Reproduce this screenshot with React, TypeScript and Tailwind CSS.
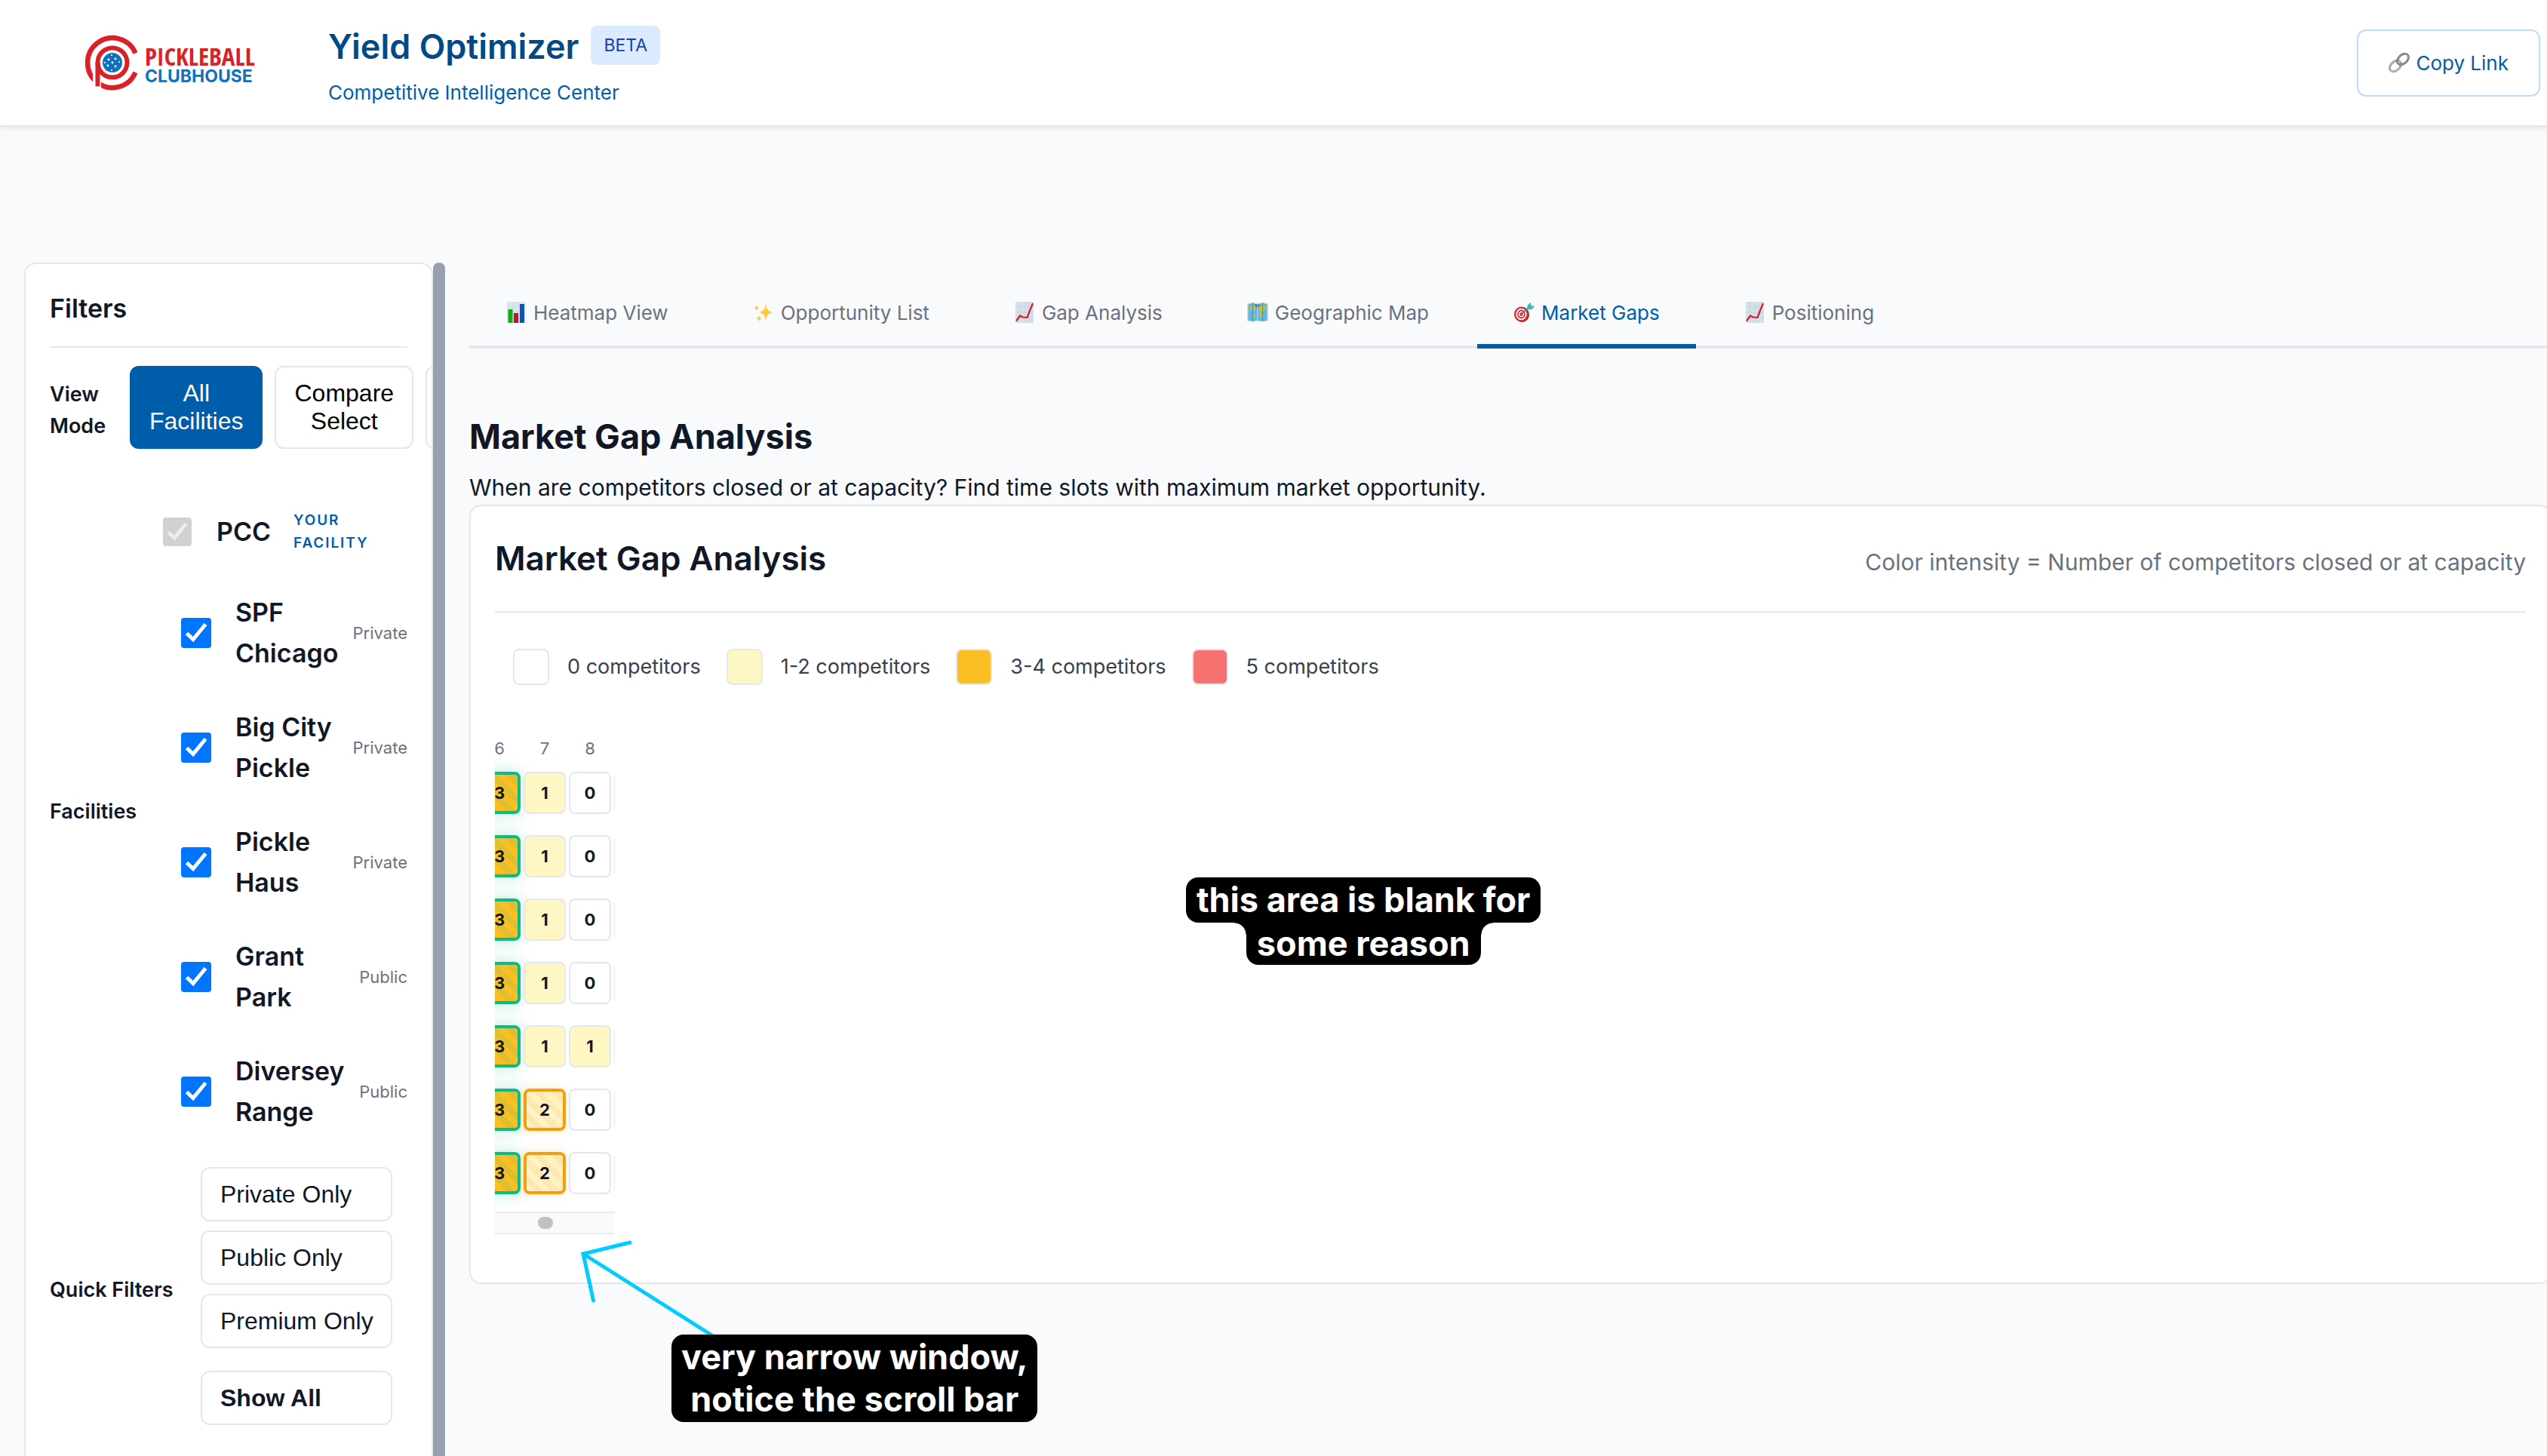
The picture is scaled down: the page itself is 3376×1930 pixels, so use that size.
import type { ReactNode } from "react";

const facilities = [
  { id: "spf", name: "SPF Chicago", kind: "Private" },
  { id: "bigcity", name: "Big City Pickle", kind: "Private" },
  { id: "haus", name: "Pickle Haus", kind: "Private" },
  { id: "grant", name: "Grant Park", kind: "Public" },
  { id: "diversey", name: "Diversey Range", kind: "Public" },
];

const hours = ["6", "7", "8", ""];

const rows: number[][] = [
  [3, 1, 0],
  [3, 1, 0],
  [3, 1, 0],
  [3, 1, 0],
  [3, 1, 1],
  [3, 2, 0],
  [3, 2, 0],
];

const cellStyles = [
  "border-2 border-gray-200 bg-white",
  "border-2 border-gray-200 bg-[#fef7c3]",
  "border-4 border-[#f59e0b] bg-[#fef3c7] bg-[repeating-linear-gradient(45deg,transparent_0px,transparent_8px,rgba(245,158,11,0.12)_8px,rgba(245,158,11,0.12)_16px)] shadow-[0_0_12px_rgba(245,158,11,0.25)]",
  "border-4 border-[#10b981] bg-[#fbbf24] bg-[repeating-linear-gradient(45deg,transparent_0px,transparent_8px,rgba(16,185,129,0.12)_8px,rgba(16,185,129,0.12)_16px)] shadow-[0_0_20px_rgba(16,185,129,0.3)]",
];

const legend = [
  { label: "0 competitors", swatch: "bg-white" },
  { label: "1-2 competitors", swatch: "bg-[#fef7c3]" },
  { label: "3-4 competitors", swatch: "bg-[#fbbf24]" },
  { label: "5 competitors", swatch: "bg-[#f87171]" },
];

function BarsIcon() {
  return (
    <svg viewBox="0 0 24 28" className="h-7 w-7" aria-hidden="true">
      <rect width="24" height="28" fill="#dbe7f0" />
      <path d="M0 7h24M0 14h24M0 21h24M8 0v28M16 0v28" stroke="#c3d3df" strokeWidth="0.6" />
      <rect x="1.5" y="10" width="6" height="18" fill="#0fae0f" />
      <rect x="9" y="15" width="6" height="13" fill="#c01525" />
      <rect x="17" y="3" width="6" height="25" fill="#0d55b8" />
    </svg>
  );
}

function SparklesIcon() {
  return (
    <svg viewBox="0 0 26 28" className="h-7 w-7" fill="#fdc93a" aria-hidden="true">
      <path d="M16 2c1 8 2.500 10.500 9.500 12C18.500 15.500 17 18 16 26c-1-8-2.500-10.500-9.500-12C13.500 12.500 15 10 16 2z" />
      <path d="M4 3c.5 3.500 1.200 4.500 4 5-2.800.500-3.500 1.500-4 5-.500-3.500-1.200-4.500-4-5 2.800-.500 3.500-1.500 4-5z" />
      <path d="M7 17c.5 3.500 1.200 4.500 4 5-2.800.500-3.500 1.500-4 5-.500-3.500-1.200-4.500-4-5 2.800-.500 3.500-1.500 4-5z" />
    </svg>
  );
}

function TrendIcon() {
  return (
    <svg viewBox="0 0 24 28" className="h-7 w-7" fill="none" aria-hidden="true">
      <rect width="24" height="28" fill="#d5e0ea" />
      <path d="M0 7h24M0 14h24M0 21h24M6 0v28M12 0v28M18 0v28" stroke="#c0ccd8" strokeWidth="0.6" />
      <path d="M1 25.500l5-7 3.500 2 6 0.500 3-8L23 2" stroke="#cf1f2b" strokeWidth="2.200" strokeLinejoin="round" />
    </svg>
  );
}

function MapIcon() {
  return (
    <svg viewBox="0 0 28 26" className="h-[26px] w-7" aria-hidden="true">
      <path d="M1 2l6.500-1.500L14 2l6.500-1.500L27 2v22l-6.500 1-6.500-1-6.500 1L1 24z" fill="#5bb8ee" stroke="#d9c9a4" strokeWidth="1.200" />
      <path d="M3 6c3-2 6-2 9 0l-2 4-3 2-3-3zM8 14l4 2-2 6-2-3zM15 6c3-2 7-2 10 0l-2 5-4 1-3-1zM16 13l5 1-1 6-3-1z" fill="#d0bb35" />
      <path d="M10 3l4-1 3 1-2 4-3-1z" fill="#3e7a67" />
      <path d="M7.500 0.500v24.500M20.500 0.500v24.500" stroke="#2d7fb6" strokeWidth="0.800" />
      <path d="M14 2v22" stroke="#a9dcf6" strokeWidth="1" />
    </svg>
  );
}

function TargetIcon() {
  return (
    <svg viewBox="0 0 28 28" className="h-7 w-7" fill="none" aria-hidden="true">
      <ellipse cx="11.500" cy="17" rx="9.500" ry="10" fill="#9c1b22" />
      <ellipse cx="10.500" cy="16.500" rx="9.500" ry="10" fill="#d9262f" />
      <ellipse cx="10.500" cy="16.500" rx="6.200" ry="6.800" stroke="#fff" strokeWidth="1.800" />
      <ellipse cx="10.500" cy="16.500" rx="2.800" ry="3.200" stroke="#fff" strokeWidth="1.400" />
      <path d="M11 16L21 7" stroke="#2b8f94" strokeWidth="1.800" />
      <path d="M18 9l1-5 4-3 .500 4L28 6l-3.500 4-5 .500z" fill="#3fb6b8" />
    </svg>
  );
}

function ChainIcon() {
  return (
    <svg viewBox="0 0 28 28" className="h-7 w-7" fill="none" aria-hidden="true">
      <ellipse cx="9" cy="18.500" rx="8.600" ry="5.800" transform="rotate(-42 9 18.500)" stroke="#74787f" strokeWidth="2.600" />
      <ellipse cx="9" cy="18.500" rx="8.600" ry="5.800" transform="rotate(-42 9 18.500)" stroke="#c3ccd5" strokeWidth="1.200" />
      <ellipse cx="19" cy="9.500" rx="8.600" ry="5.800" transform="rotate(-42 19 9.500)" stroke="#59535a" strokeWidth="2.600" />
      <ellipse cx="19" cy="9.500" rx="8.600" ry="5.800" transform="rotate(-42 19 9.500)" stroke="#a9b2bc" strokeWidth="1" />
    </svg>
  );
}

function LogoMark() {
  return (
    <svg viewBox="0 0 72 74" className="h-[74px] w-[72px]" fill="none" aria-hidden="true">
      <path d="M67.500 24.500A33 33 0 1 0 67.500 50" stroke="#da2128" strokeWidth="6.500" />
      <path d="M16.500 36V72" stroke="#fff" strokeWidth="11" />
      <path d="M17.500 68.500V37" stroke="#da2128" strokeWidth="6" />
      <circle cx="37" cy="37" r="19.500" stroke="#da2128" strokeWidth="6" />
      <circle cx="37" cy="37" r="13" fill="#0f73bb" />
      <g fill="#fff">
        <circle cx="37" cy="37" r="1.400" />
        <circle cx="32" cy="33" r="1.400" />
        <circle cx="41" cy="32" r="1.400" />
        <circle cx="31" cy="41" r="1.400" />
        <circle cx="41" cy="42" r="1.400" />
        <circle cx="36" cy="27" r="1.100" />
        <circle cx="46" cy="36" r="1.100" />
        <circle cx="36" cy="47" r="1.100" />
        <circle cx="27" cy="37" r="1.100" />
      </g>
    </svg>
  );
}

const tabs: { label: string; icon: ReactNode; active?: boolean }[] = [
  { label: "Heatmap View", icon: <BarsIcon /> },
  { label: "Opportunity List", icon: <SparklesIcon /> },
  { label: "Gap Analysis", icon: <TrendIcon /> },
  { label: "Geographic Map", icon: <MapIcon /> },
  { label: "Market Gaps", icon: <TargetIcon />, active: true },
  { label: "Positioning", icon: <TrendIcon /> },
];

function Checkbox({ id, disabled }: { id: string; disabled?: boolean }) {
  return (
    <span className="relative inline-flex shrink-0">
      <input
        id={id}
        type="checkbox"
        defaultChecked
        disabled={disabled}
        className={
          disabled
            ? "size-[38px] appearance-none rounded bg-[#d1d1d1]"
            : "size-10 appearance-none rounded bg-[#0075ff]"
        }
      />
      <svg viewBox="0 0 40 40" className="pointer-events-none absolute inset-0 size-full" fill="none" aria-hidden="true">
        <path d="M7.500 20.500L16 28.500L32.500 8.500" stroke={disabled ? "#ededed" : "#ffffff"} strokeWidth="5" />
      </svg>
    </span>
  );
}

function Header() {
  return (
    <header className="flex h-[168px] shrink-0 items-center border-b-2 border-gray-200 bg-white pr-[9px] pl-28 shadow-[0_2px_6px_rgba(0,0,0,0.08)]">
      <a href="#home" className="flex w-[323px] items-center gap-2">
        <LogoMark />
        <span className="mt-2 flex flex-col font-bold">
          <span className="font-['Open_Sans_Condensed','Roboto_Condensed',sans-serif] text-[33px] leading-7 text-[#da2128]">PICKLEBALL</span>
          <span className="text-[23px] leading-6 text-[#0f73bb]">CLUBHOUSE</span>
        </span>
      </a>
      <div className="mt-2 flex flex-col gap-[15px]">
        <div className="flex items-start gap-4">
          <h1 className="text-[45px] leading-[56px] font-semibold text-[#004b87]">Yield Optimizer</h1>
          <span className="rounded-lg bg-blue-100 px-[17px] text-[23px] leading-[52px] text-blue-800">BETA</span>
        </div>
        <p className="text-[26px] leading-9 text-[#005eaa]">Competitive Intelligence Center</p>
      </div>
      <button type="button" className="ml-auto flex h-[89px] items-center gap-2 rounded-xl border-2 border-blue-200 bg-white px-10 text-[26px] text-[#005eaa]">
        <ChainIcon />
        Copy Link
      </button>
    </header>
  );
}

const modeButton = "shrink-0 rounded-xl border-2 px-6 py-4 text-center font-['Liberation_Sans',Arial,sans-serif] text-[32px] leading-[37px]";
const quickButton = "h-[72px] rounded-xl border-2 border-gray-200 bg-white px-6 text-left font-['Liberation_Sans',Arial,sans-serif] text-[32px] leading-9 whitespace-nowrap";

function Sidebar() {
  return (
    <div className="flex shrink-0 items-stretch">
      <aside className="w-[542px] overflow-hidden rounded-t-2xl border-2 border-b-0 border-gray-200 bg-white px-8 pt-8">
        <h2 className="border-b-2 border-gray-200 pb-[23px] text-[34px] leading-[54px] font-semibold">Filters</h2>

        <section className="mt-6 flex items-center">
          <h3 className="mt-2 w-[106px] shrink-0 text-[27px] leading-[42px] font-semibold">
            View
            <br />
            Mode
          </h3>
          <div className="flex gap-4">
            <button type="button" className={`${modeButton} border-[#005daa] bg-[#005daa] text-white`}>
              All
              <br />
              Facilities
            </button>
            <button type="button" className={`${modeButton} border-gray-200 bg-white text-black`}>
              Compare
              <br />
              Select
            </button>
            <button type="button" aria-label="More modes" className={`${modeButton} border-gray-200 bg-white`} />
          </div>
        </section>

        <section className="mt-14 flex items-center justify-between">
          <h3 className="text-[27px] leading-[42px] font-semibold">Facilities</h3>
          <div className="w-[324px]">
            <div className="flex h-[108px] items-center">
              <Checkbox id="pcc" disabled />
              <label htmlFor="pcc" className="ml-[33px] text-[34px] leading-[54px] font-semibold">
                PCC
              </label>
              <span className="ml-[30px] w-28 text-[19px] leading-[30px] font-semibold tracking-widest text-[#005eaa]">YOUR FACILITY</span>
            </div>
            <ul className="mt-[26px] flex flex-col gap-11 pl-6">
              {facilities.map((f) => (
                <li key={f.id} className="flex items-center">
                  <Checkbox id={f.id} />
                  <label htmlFor={f.id} className="ml-8 min-w-0 flex-1 text-[34px] leading-[54px] font-semibold">
                    {f.name}
                  </label>
                  <span className="text-[22px] leading-8 text-gray-500">{f.kind}</span>
                </li>
              ))}
            </ul>
          </div>
        </section>

        <section className="mt-[46px] flex items-center justify-between pr-5">
          <h3 className="mb-4 text-[27px] leading-[42px] font-semibold">Quick Filters</h3>
          <div className="flex w-[254px] flex-col gap-3">
            <button type="button" className={quickButton}>Private Only</button>
            <button type="button" className={quickButton}>Public Only</button>
            <button type="button" className={quickButton}>Premium Only</button>
            <button type="button" className={`${quickButton} mt-[18px] font-bold`}>Show All</button>
          </div>
        </section>
      </aside>
      <div className="w-4 rounded-t-full bg-gray-400" />
    </div>
  );
}

function Heatmap() {
  return (
    <div className="mt-[66px] w-[159px] overflow-hidden">
      <table className="-ml-[26px] w-[244px] table-fixed border-separate border-spacing-x-1 border-spacing-y-0">
        <thead>
          <tr>
            {hours.map((h, i) => (
              <th key={i} scope="col" className="h-[35px] p-0 text-center text-[22px] leading-[34px] font-normal text-gray-500">
                {h}
              </th>
            ))}
          </tr>
        </thead>
        <tbody>
          {rows.map((row, r) => (
            <tr key={r}>
              {row.map((n, c) => (
                <td key={c} className="px-0 py-[14px]">
                  <div className={`flex h-14 items-center justify-center rounded-lg text-[22px] leading-7 font-bold ${cellStyles[n]}`}>{n}</div>
                </td>
              ))}
              <td className="px-0 py-[14px]">
                <div className="h-14 rounded-lg border-2 border-gray-200 bg-white" />
              </td>
            </tr>
          ))}
        </tbody>
      </table>
      <div className="mt-[9px] flex h-[30px] items-center justify-center border-y-2 border-[#ebebeb] bg-[#fafafa] pr-[26px]">
        <div className="h-4 w-5 rounded-full bg-[#c1c1c1]" />
      </div>
    </div>
  );
}

function Main() {
  return (
    <main className="-mr-1.5 ml-8 min-w-0 flex-1">
      <nav className="mt-6 flex gap-4 border-b-4 border-gray-200">
        {tabs.map((t) => (
          <button
            key={t.label}
            type="button"
            className={
              t.active
                ? "-mb-1 flex h-[90px] items-center gap-[9px] border-b-[6px] border-[#005daa] px-12 text-[26px] text-[#005daa]"
                : "-mb-1 flex h-[90px] items-center gap-[9px] border-b-[6px] border-transparent px-12 text-[26px] text-gray-500"
            }
          >
            {t.icon}
            {t.label}
          </button>
        ))}
      </nav>
      <h2 className="mt-[89px] text-[45px] leading-[56px] font-bold">Market Gap Analysis</h2>
      <p className="mt-4 text-[30px] leading-[46px]">
        When are competitors closed or at capacity? Find time slots with maximum market opportunity.
      </p>
      <section className="rounded-2xl border-2 border-gray-200 bg-white px-8 pt-[41px] pb-16">
        <div className="flex items-baseline justify-between border-b-2 border-gray-200 pb-[42px]">
          <h3 className="text-[44px] leading-[56px] font-semibold">Market Gap Analysis</h3>
          <p className="text-[30px] leading-[46px] text-gray-500">Color intensity = Number of competitors closed or at capacity</p>
        </div>
        <ul className="mt-12 flex gap-[34px] px-6">
          {legend.map((l) => (
            <li key={l.label} className="flex items-center gap-6 text-[27px] leading-[42px] text-gray-700">
              <span className={`size-12 rounded-lg border-2 border-gray-200 ${l.swatch}`} />
              {l.label}
            </li>
          ))}
        </ul>
        <Heatmap />
      </section>
    </main>
  );
}

function Annotations() {
  return (
    <>
      <svg viewBox="0 0 190 130" className="pointer-events-none absolute top-[1642px] left-[766px] h-[130px] w-[190px]" fill="none" aria-hidden="true">
        <path d="M69 5L7 20L20.500 82M7 20L184 132" stroke="#00ccff" strokeWidth="5" strokeLinecap="round" />
      </svg>
      <div className="absolute top-[1769px] left-[890px] rounded-2xl bg-black px-[13px] py-0.5 text-center text-[45px] leading-[56px] font-bold whitespace-nowrap text-white">
        very narrow window,
        <br />
        notice the scroll bar
      </div>
      <div className="absolute top-[1163px] left-[1572px] flex flex-col items-center text-[45px] leading-[56px] font-bold whitespace-nowrap text-white">
        <div className="rounded-2xl bg-black px-[14px] py-0.5">this area is blank for</div>
        <div className="flex">
          <span className="size-4 bg-[radial-gradient(circle_at_bottom_left,transparent_15px,black_16px)]" />
          <span className="rounded-b-2xl bg-black px-[14px]">some reason</span>
          <span className="size-4 bg-[radial-gradient(circle_at_bottom_right,transparent_15px,black_16px)]" />
        </div>
      </div>
    </>
  );
}

export default function App() {
  return (
    <div className="relative flex h-screen flex-col overflow-hidden bg-gray-50 font-['Inter',sans-serif] text-gray-900">
      <Header />
      <div className="mt-[180px] flex min-h-0 flex-1 pl-8">
        <Sidebar />
        <Main />
      </div>
      <Annotations />
    </div>
  );
}
